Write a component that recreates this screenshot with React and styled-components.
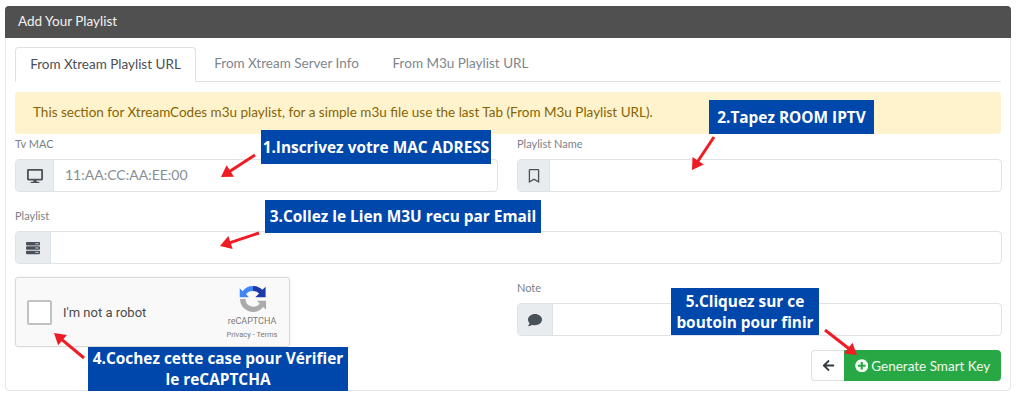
import React from "react";
import styled, { createGlobalStyle } from "styled-components";
import { FaDesktop, FaRegBookmark, FaServer, FaComment, FaArrowLeft, FaPlusCircle } from "react-icons/fa";

const GlobalStyle = createGlobalStyle`
    html, body {
        margin: 0;
        padding: 0;
        background: #fff;
    }
    body {
        font-family: "Lato", "Open Sans", sans-serif;
        color: #495057;
    }
`;

const Page = styled.div`
    position: relative;
    width: 1024px;
    height: 400px;
    overflow: hidden;
    padding: 6px 13px 0 5px;
    box-sizing: border-box;
`;

const Card = styled.div`
    height: 385px;
    box-sizing: border-box;
    border: 1px solid #e4e7ea;
    border-radius: 4px;
    display: flex;
    flex-direction: column;
`;

const CardHeader = styled.div`
    height: 32px;
    margin: -1px -1px 0;
    background: #505050;
    border-radius: 4px 4px 0 0;
    color: #f2f2f2;
    font-size: 13.5px;
    line-height: 31px;
    padding-left: 13px;
`;

const CardBody = styled.div`
    padding: 9px 9px 0;
    display: flex;
    flex-direction: column;
`;

const Tabs = styled.div`
    display: flex;
    height: 34px;
    border-bottom: 1px solid #dee2e6;
`;

const Tab = styled.div`
    box-sizing: border-box;
    width: ${(p) => p.$width}px;
    height: 35px;
    text-align: center;
    font-size: 13.5px;
    line-height: 33px;
    color: ${(p) => (p.$active ? "#495057" : "#80868c")};
    ${(p) =>
        p.$active &&
        `
        background: #fff;
        border: 1px solid #dee2e6;
        border-bottom-color: #fff;
        border-radius: 4px 4px 0 0;
    `}
`;

const Alert = styled.div`
    margin-top: 10px;
    height: 42px;
    box-sizing: border-box;
    background: #fff3cd;
    border-radius: 4px;
    color: #856404;
    font-size: 13.5px;
    line-height: 40px;
    padding-left: 18px;
`;

const FormGrid = styled.div`
    display: grid;
    grid-template-columns: 483px 485px;
    column-gap: 19px;
`;

const Field = styled.div`
    grid-column: ${(p) => (p.$full ? "1 / 3" : "auto")};
    padding-top: ${(p) => p.$top}px;
`;

const Label = styled.div`
    font-size: 11px;
    line-height: 16px;
    height: 16px;
    color: #7b8188;
`;

const InputGroup = styled.div`
    display: flex;
    height: 33px;
    box-sizing: border-box;
    margin-top: 7px;
    border: 1px solid #dfe3e7;
    border-radius: 4px;
    overflow: hidden;
    background: #fff;
`;

const Addon = styled.div`
    box-sizing: border-box;
    width: ${(p) => p.$width}px;
    flex: none;
    background: #e9ecef;
    border-right: 1px solid #dfe3e7;
    display: flex;
    align-items: center;
    justify-content: center;
    color: #495057;
    font-size: ${(p) => p.$icon}px;
`;

const InputText = styled.div`
    padding-left: 11px;
    font-size: 14px;
    line-height: 30px;
    color: #868e96;
`;

const LowerRow = styled.div`
    display: grid;
    grid-template-columns: 483px 485px;
    column-gap: 19px;
    position: relative;
`;

const Recaptcha = styled.div`
    margin-top: 13px;
    width: 275px;
    height: 70px;
    box-sizing: border-box;
    background: #f9f9f9;
    border: 1px solid #d9d9d9;
    border-radius: 3px;
    box-shadow: 0 0 3px rgba(0, 0, 0, 0.08);
    display: flex;
    align-items: center;
    padding-left: 11px;
    position: relative;
    font-family: Roboto, sans-serif;
`;

const CheckBox = styled.div`
    width: 25px;
    height: 25px;
    box-sizing: border-box;
    background: #fff;
    border: 2px solid #c1c1c1;
    border-radius: 2px;
`;

const RobotText = styled.div`
    margin-left: 11px;
    font-size: 13px;
    color: #4a4a4a;
`;

const RecaptchaBrand = styled.div`
    margin-left: auto;
    width: 72px;
    margin-right: 1px;
    display: flex;
    flex-direction: column;
    align-items: center;
    color: #7a7a7a;
`;

const LogoWrap = styled.svg`
    margin-left: 2px;
`;

const BrandName = styled.div`
    font-size: 9px;
    line-height: 11px;
    margin-top: 3px;
`;

const BrandLinks = styled.div`
    font-size: 7.5px;
    line-height: 10px;
    margin-top: 3px;
`;

const Actions = styled.div`
    display: flex;
    justify-content: flex-end;
    margin: 14px 1px 0 0;
`;

const BackButton = styled.div`
    width: 33px;
    height: 31px;
    box-sizing: border-box;
    border: 1px solid #dee2e6;
    border-right: none;
    border-radius: 4px 0 0 4px;
    display: flex;
    align-items: center;
    justify-content: center;
    font-size: 13px;
    color: #343a40;
`;

const GenerateButton = styled.div`
    width: 157px;
    height: 31px;
    background: #28a745;
    border-radius: 0 4px 4px 0;
    color: #f1f8f2;
    font-size: 13.5px;
    display: flex;
    align-items: center;
    justify-content: center;
    gap: 3px;
`;

const Callout = styled.div`
    position: absolute;
    left: ${(p) => p.$x}px;
    top: ${(p) => p.$y}px;
    width: ${(p) => p.$w}px;
    height: ${(p) => p.$h}px;
    background: #0047ab;
    color: #fff;
    font-family: "Open Sans", sans-serif;
    font-weight: 700;
    font-size: 15.4px;
    line-height: 21px;
    text-align: center;
    display: flex;
    align-items: center;
    justify-content: center;
    white-space: pre;
`;

const ArrowLayer = styled.svg`
    position: absolute;
    left: 0;
    top: 0;
    pointer-events: none;
`;

const arrows = [
    [255, 155, 221, 177],
    [714, 137, 692, 170],
    [259, 233, 220, 246],
    [84, 358, 54, 333],
    [825, 330, 857, 355],
];

const callouts = [
    { x: 261, y: 130, w: 230, h: 34, text: "1.Inscrivez votre MAC ADRESS" },
    { x: 709, y: 100, w: 165, h: 34, text: "2.Tapez ROOM IPTV" },
    { x: 265, y: 200, w: 276, h: 33, text: "3.Collez le Lien M3U recu par Email" },
    { x: 88, y: 347, w: 260, h: 44, text: "4.Cochez cette case pour Vérifier\nle reCAPTCHA" },
    { x: 671, y: 288, w: 148, h: 47, text: "5.Cliquez sur ce\nboutoin pour finir" },
];

const Arrow = ({ from, to }) => {
    const [x1, y1] = from;
    const [x2, y2] = to;
    const angle = Math.atan2(y2 - y1, x2 - x1);
    const head = 13;
    const spread = 0.55;
    const ax = x2 - head * Math.cos(angle - spread);
    const ay = y2 - head * Math.sin(angle - spread);
    const bx = x2 - head * Math.cos(angle + spread);
    const by = y2 - head * Math.sin(angle + spread);
    return (
        <g>
            <line x1={x1} y1={y1} x2={x2 - 6 * Math.cos(angle)} y2={y2 - 6 * Math.sin(angle)} stroke="#f01c24" strokeWidth="3" />
            <polygon points={`${x2},${y2} ${ax},${ay} ${bx},${by}`} fill="#f01c24" />
        </g>
    );
};

const RecaptchaLogo = () => (
    <LogoWrap width="28" height="28" viewBox="0 0 30 30">
        <path d="M15 1a14 14 0 0 1 10 4.2L28.5 2v11H17.5l4-4A8.5 8.5 0 0 0 15 6.5z" fill="#1c3aa9" />
        <path d="M15 1A14 14 0 0 0 3.8 6.6L0.8 3.5V13h9.8l-3-3A8.5 8.5 0 0 1 15 6.5z" fill="#4285f4" />
        <path d="M1 15a14 14 0 0 0 25 8.6l3 3V17H19.2l3 3A8.5 8.5 0 0 1 7 15z" fill="#ababab" />
    </LogoWrap>
);

const App = () => {
    return (
        <Page>
            <GlobalStyle />
            <Card>
                <CardHeader>Add Your Playlist</CardHeader>
                <CardBody>
                    <Tabs>
                        <Tab $active $width={181}>From Xtream Playlist URL</Tab>
                        <Tab $width={181}>From Xtream Server Info</Tab>
                        <Tab $width={167}>From M3u Playlist URL</Tab>
                    </Tabs>
                    <Alert>This section for XtreamCodes m3u playlist, for a simple m3u file use the last Tab (From M3u Playlist URL).</Alert>
                    <FormGrid>
                        <Field $top={2}>
                            <Label>Tv MAC</Label>
                            <InputGroup>
                                <Addon $width={38} $icon={16}><FaDesktop /></Addon>
                                <InputText>11:AA:CC:AA:EE:00</InputText>
                            </InputGroup>
                        </Field>
                        <Field $top={2}>
                            <Label>Playlist Name</Label>
                            <InputGroup>
                                <Addon $width={32} $icon={14}><FaRegBookmark /></Addon>
                            </InputGroup>
                        </Field>
                        <Field $full $top={16}>
                            <Label>Playlist</Label>
                            <InputGroup>
                                <Addon $width={35} $icon={14}><FaServer /></Addon>
                            </InputGroup>
                        </Field>
                    </FormGrid>
                    <LowerRow>
                        <Recaptcha>
                            <CheckBox />
                            <RobotText>I'm not a robot</RobotText>
                            <RecaptchaBrand>
                                <RecaptchaLogo />
                                <BrandName>reCAPTCHA</BrandName>
                                <BrandLinks>Privacy - Terms</BrandLinks>
                            </RecaptchaBrand>
                        </Recaptcha>
                        <div>
                            <Field $top={16}>
                                <Label>Note</Label>
                                <InputGroup>
                                    <Addon $width={35} $icon={14}><FaComment /></Addon>
                                </InputGroup>
                            </Field>
                            <Actions>
                                <BackButton><FaArrowLeft /></BackButton>
                                <GenerateButton><FaPlusCircle />Generate Smart Key</GenerateButton>
                            </Actions>
                        </div>
                    </LowerRow>
                </CardBody>
            </Card>
            <ArrowLayer width="1024" height="400">
                {arrows.map(([x1, y1, x2, y2]) => (
                    <Arrow key={x1} from={[x1, y1]} to={[x2, y2]} />
                ))}
            </ArrowLayer>
            {callouts.map((c) => (
                <Callout key={c.x} $x={c.x} $y={c.y} $w={c.w} $h={c.h}>{c.text}</Callout>
            ))}
        </Page>
    );
};

export default App;
